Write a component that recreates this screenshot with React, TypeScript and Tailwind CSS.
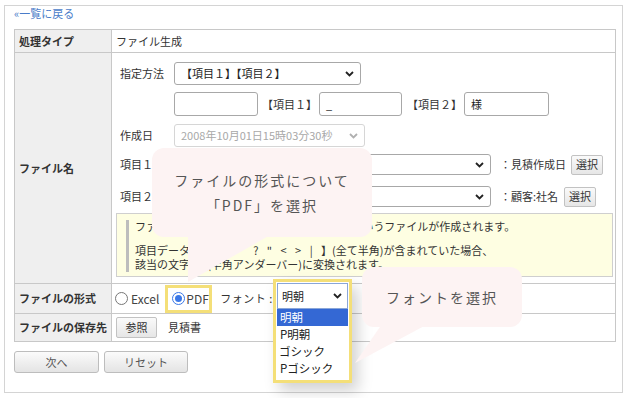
const Chevron = ({ muted = false }: { muted?: boolean }) => (
  <svg width="9" height="6" viewBox="0 0 9 6" className="shrink-0">
    <polyline
      points="1,1 4.5,4.5 8,1"
      fill="none"
      stroke={muted ? "#b0b0b0" : "#222"}
      strokeWidth="1.8"
    />
  </svg>
);

const Select = ({
  text,
  className,
  disabled = false,
}: {
  text: string;
  className: string;
  disabled?: boolean;
}) => (
  <div
    className={`flex items-center justify-between rounded-[3px] border bg-white pl-[6px] pr-[6px] text-[11px] ${
      disabled ? "border-[#d6d6d6] text-[#a8a8a8]" : "border-[#a8a8a8] text-[#222]"
    } ${className}`}
  >
    <span className="whitespace-nowrap">{text}</span>
    <Chevron muted={disabled} />
  </div>
);

const Input = ({ value, className }: { value?: string; className: string }) => (
  <div
    className={`flex h-[24px] items-center rounded-[3px] border border-[#a8a8a8] bg-white px-[6px] text-[11px] text-[#222] ${className}`}
  >
    {value}
  </div>
);

const SmallButton = ({ label, className }: { label: string; className: string }) => (
  <div
    className={`flex items-center justify-center rounded-[2px] border border-[#c2c2c2] bg-gradient-to-b from-[#fafafa] to-[#e6e6e6] text-[11px] text-[#333] ${className}`}
  >
    {label}
  </div>
);

const Radio = ({ checked = false }: { checked?: boolean }) =>
  checked ? (
    <span className="flex h-[13px] w-[13px] items-center justify-center rounded-full border-[1.5px] border-[#3b78e7] bg-white">
      <span className="h-[7px] w-[7px] rounded-full bg-[#3b78e7]" />
    </span>
  ) : (
    <span className="h-[13px] w-[13px] rounded-full border border-[#777] bg-white" />
  );

const Head = ({ children, className }: { children: React.ReactNode; className: string }) => (
  <div
    className={`flex w-[97px] items-center border-r border-b border-[#c8c8c8] bg-[#efefef] px-[4px] text-[11px] font-bold text-[#333] ${className}`}
  >
    {children}
  </div>
);

const Cell = ({ children, className }: { children?: React.ReactNode; className: string }) => (
  <div className={`w-[504px] border-r border-b border-[#c8c8c8] text-[11px] text-[#333] ${className}`}>
    {children}
  </div>
);

const App = () => {
  return (
    <div className="relative h-[398px] w-[628px] overflow-hidden bg-white font-['Noto_Sans_CJK_JP','Noto_Sans',sans-serif] text-[#333]">
      <div className="ml-[4px] mt-[5px] h-[388px] w-[619px] border border-[#d4d4d4] pl-[9px]">
        <div className="h-[14px] text-[11px] leading-[14px] text-[#4a7cc9]">«一覧に戻る</div>

        {/* table */}
        <div className="mt-[9px] w-[602px] border-t border-l border-[#c8c8c8]">
          <div className="flex">
            <Head className="h-[23px]">処理タイプ</Head>
            <Cell className="flex h-[23px] items-center pl-[4px]">ファイル生成</Cell>
          </div>

          <div className="flex">
            <Head className="h-[231px]">ファイル名</Head>
            <Cell className="flex h-[231px] flex-col pl-[4px] pt-[9px]">
              <div className="flex h-[23px] items-center">
                <span className="w-[58px] pl-[4px]">指定方法</span>
                <Select text="【項目１】【項目２】" className="h-[23px] w-[187px]" />
              </div>
              <div className="mt-[7px] flex h-[24px] items-center pl-[58px]">
                <Input className="w-[84px]" />
                <span className="ml-[4px] w-[57px]">【項目１】</span>
                <Input value="_" className="w-[83px]" />
                <span className="ml-[5px] w-[57px]">【項目２】</span>
                <Input value="様" className="w-[85px]" />
              </div>
              <div className="mt-[8px] flex h-[23px] items-center">
                <span className="w-[58px] pl-[4px]">作成日</span>
                <Select text="2008年10月01日15時03分30秒" disabled className="h-[23px] w-[191px]" />
              </div>
              <div className="mt-[7px] flex h-[21px] items-center">
                <span className="w-[58px] pl-[4px]">項目１</span>
                <Select text="" className="h-[21px] w-[317px]" />
                <span className="ml-[9px] w-[71px]">：見積作成日</span>
                <SmallButton label="選択" className="h-[20px] w-[32px]" />
              </div>
              <div className="mt-[11px] flex h-[21px] items-center">
                <span className="w-[58px] pl-[4px]">項目２</span>
                <Select text="" className="h-[21px] w-[317px]" />
                <span className="ml-[9px] w-[64px]">：顧客:社名</span>
                <SmallButton label="選択" className="h-[20px] w-[32px]" />
              </div>
              <div className="mt-[6px] flex h-[64px] w-[497px] border border-[#cfcfcf] bg-[#fefee2] pl-[9px] pt-[6px]">
                <div className="h-[52px] w-[3px] bg-[#bdbdbd]" />
                <div className="pl-[6px] text-[11px] leading-[14px] text-[#333]">
                  <div className="-mt-[1px]">ファイル名は「見積作成日_顧客:社名.pdf」というファイルが作成されます。</div>
                  <div className="mt-[10px] whitespace-nowrap">
                    項目データに【 \ / <span className="tracking-[3px]">: * ? " &lt; &gt; | </span>】(全て半角)が含まれていた場合、
                  </div>
                  <div>該当の文字は_(半角アンダーバー)に変換されます。</div>
                </div>
              </div>
            </Cell>
          </div>

          <div className="flex">
            <Head className="h-[30px]">ファイルの形式</Head>
            <Cell className="flex h-[30px] items-center pl-[3px]">
              <Radio />
              <span className="ml-[3px] text-[12px] text-[#444]">Excel</span>
              <div className="ml-[6px] flex h-[28px] w-[47px] items-center border-[3px] border-[#f4df78] pl-[4px]">
                <Radio checked />
                <span className="ml-[1px] text-[12px] text-[#444]">PDF</span>
              </div>
              <span className="ml-[8px] whitespace-nowrap text-[11px] tracking-[0.5px]">フォント :</span>
            </Cell>
          </div>

          <div className="flex">
            <Head className="h-[28px]">ファイルの保存先</Head>
            <Cell className="flex h-[28px] items-center pl-[4px]">
              <SmallButton label="参照" className="h-[21px] w-[41px]" />
              <span className="ml-[11px]">見積書</span>
            </Cell>
          </div>
        </div>

        <div className="mt-[9px] flex gap-[5px]">
          <div className="flex h-[22px] w-[85px] items-center justify-center rounded-[3px] border border-[#bdbdbd] bg-gradient-to-b from-[#fbfbfb] to-[#e4e4e4] text-[11px] text-[#555]">
            次へ
          </div>
          <div className="flex h-[22px] w-[84px] items-center justify-center rounded-[3px] border border-[#bdbdbd] bg-gradient-to-b from-[#fbfbfb] to-[#e4e4e4] text-[11px] text-[#555]">
            リセット
          </div>
        </div>
      </div>

      {/* font dropdown, open */}
      <div className="absolute left-[273px] top-[279px] h-[104px] w-[79px] border-[3px] border-[#f4df78] bg-white p-[1px] shadow-[6px_8px_14px_rgba(0,0,0,0.18)]">
        <div className="flex h-[26px] items-center justify-between border border-[#8aa6d8] bg-white pl-[4px] pr-[5px] text-[11px] text-[#222]">
          <span>明朝</span>
          <Chevron />
        </div>
        <div className="text-[11.5px] leading-[17px] text-[#222]">
          <div className="bg-[#3468d4] pl-[3px] text-white">明朝</div>
          <div className="pl-[3px]">P明朝</div>
          <div className="pl-[2px]">ゴシック</div>
          <div className="pl-[3px]">Pゴシック</div>
        </div>
      </div>

      {/* callout 1 */}
      <svg className="absolute left-[186px] top-[234px]" width="90" height="50" viewBox="0 0 90 50">
        <polygon points="2,0 86,0 2,48" fill="#fdf3f3" />
      </svg>
      <div className="absolute left-[152px] top-[148px] flex h-[89px] w-[220px] flex-col items-center justify-center rounded-[12px] bg-[#fdf3f3] text-[14px] leading-[25px] tracking-[2px] text-[#555]">
        <div>ファイルの形式について</div>
        <div>「PDF」を選択</div>
      </div>

      {/* callout 2 */}
      <svg className="absolute left-[352px] top-[324px]" width="80" height="42" viewBox="0 0 80 42">
        <polygon points="30,0 76,0 3,39" fill="#fdf3f3" />
      </svg>
      <div className="absolute left-[362px] top-[267px] flex h-[60px] w-[160px] items-center justify-center rounded-[12px] bg-[#fdf3f3] text-[14px] tracking-[2px] text-[#555]">
        フォントを選択
      </div>
    </div>
  );
};

export default App;
